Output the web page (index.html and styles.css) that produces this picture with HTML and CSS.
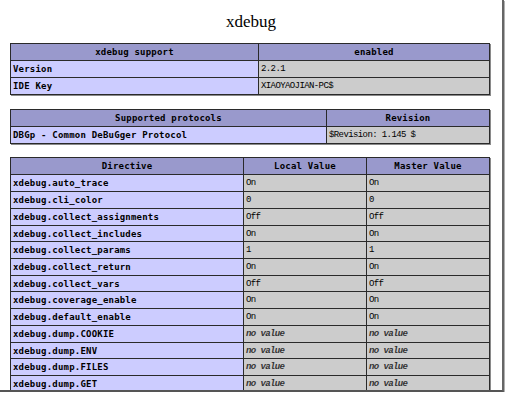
FILE: index.html
```html
<!DOCTYPE html>
<html>
<head>
<meta charset="utf-8">
<link rel="stylesheet" href="styles.css">
</head>
<body>
<div class="window">
  <h1 class="title">xdebug</h1>

  <table class="info t1">
    <colgroup><col class="c1a"><col class="c1b"></colgroup>
    <tr class="h"><th>xdebug support</th><th>enabled</th></tr>
    <tr><td class="e">Version</td><td class="v">2.2.1</td></tr>
    <tr><td class="e">IDE Key</td><td class="v">XIAOYAOJIAN-PC$</td></tr>
  </table>

  <table class="info t2">
    <colgroup><col class="c2a"><col class="c2b"></colgroup>
    <tr class="h"><th>Supported protocols</th><th>Revision</th></tr>
    <tr><td class="e">DBGp - Common DeBuGger Protocol</td><td class="v">$Revision: 1.145 $</td></tr>
  </table>

  <table class="info t3">
    <colgroup><col class="c3a"><col class="c3b"><col class="c3c"></colgroup>
    <tr class="h"><th>Directive</th><th>Local Value</th><th>Master Value</th></tr>
    <tr><td class="e">xdebug.auto_trace</td><td class="v">On</td><td class="v">On</td></tr>
    <tr><td class="e">xdebug.cli_color</td><td class="v">0</td><td class="v">0</td></tr>
    <tr><td class="e">xdebug.collect_assignments</td><td class="v">Off</td><td class="v">Off</td></tr>
    <tr class="short"><td class="e">xdebug.collect_includes</td><td class="v">On</td><td class="v">On</td></tr>
    <tr><td class="e">xdebug.collect_params</td><td class="v">1</td><td class="v">1</td></tr>
    <tr><td class="e">xdebug.collect_return</td><td class="v">On</td><td class="v">On</td></tr>
    <tr class="short"><td class="e">xdebug.collect_vars</td><td class="v">Off</td><td class="v">Off</td></tr>
    <tr><td class="e">xdebug.coverage_enable</td><td class="v">On</td><td class="v">On</td></tr>
    <tr><td class="e">xdebug.default_enable</td><td class="v">On</td><td class="v">On</td></tr>
    <tr><td class="e">xdebug.dump.COOKIE</td><td class="v"><i>no value</i></td><td class="v"><i>no value</i></td></tr>
    <tr class="short"><td class="e">xdebug.dump.ENV</td><td class="v"><i>no value</i></td><td class="v"><i>no value</i></td></tr>
    <tr><td class="e">xdebug.dump.FILES</td><td class="v"><i>no value</i></td><td class="v"><i>no value</i></td></tr>
    <tr><td class="e">xdebug.dump.GET</td><td class="v"><i>no value</i></td><td class="v"><i>no value</i></td></tr>
  </table>
</div>
</body>
</html>
```

FILE: styles.css
```css
html, body {
  margin: 0;
  padding: 0;
  background: #ffffff;
}

.window {
  width: 504px;
  height: 392px;
  box-sizing: border-box;
  border-right: 2px solid #666666;
  border-bottom: 2px solid #555555;
  box-shadow: 1px 1px 0 #b0b0b0;
  overflow: hidden;
  background: #ffffff;
}

.title {
  margin: 12px 0 0 0;
  font-family: "Liberation Serif", serif;
  font-size: 17px;
  line-height: 20px;
  font-weight: normal;
  text-align: center;
  color: #000000;
}

.info {
  border-collapse: collapse;
  table-layout: fixed;
  width: 479px;
  margin-left: 10px;
  box-shadow: 1px 1px 0 #8a8a8a;
}

.t1 { margin-top: 11px; }
.t2 { margin-top: 14px; }
.t3 { margin-top: 13px; }

.c1a { width: 248px; }
.c1b { width: 231px; }
.c2a { width: 316px; }
.c2b { width: 163px; }
.c3a { width: 233px; }
.c3b { width: 123px; }
.c3c { width: 123px; }

.info tr {
  height: 17px;
}

.info tr.short {
  height: 16px;
}

.info th,
.info td {
  padding: 0 2px;
  border: 1px solid #2a2a2a;
  vertical-align: middle;
  white-space: nowrap;
  overflow: hidden;
  color: #000000;
  line-height: 12px;
}

.info th {
  background: #9999cc;
  text-align: center;
  font-family: "DejaVu Sans Mono", monospace;
  font-size: 9px;
  letter-spacing: 0.2px;
  font-weight: bold;
}

.info td.e {
  background: #ccccff;
  text-align: left;
  font-family: "DejaVu Sans Mono", monospace;
  font-size: 9px;
  letter-spacing: 0.2px;
  font-weight: bold;
}

.info td.v {
  background: #cccccc;
  text-align: left;
  font-family: "Liberation Mono", monospace;
  font-size: 9px;
  letter-spacing: -0.6px;
  font-weight: normal;
}

.info td.v i {
  font-style: italic;
  font-weight: bold;
  color: #333333;
}
```
